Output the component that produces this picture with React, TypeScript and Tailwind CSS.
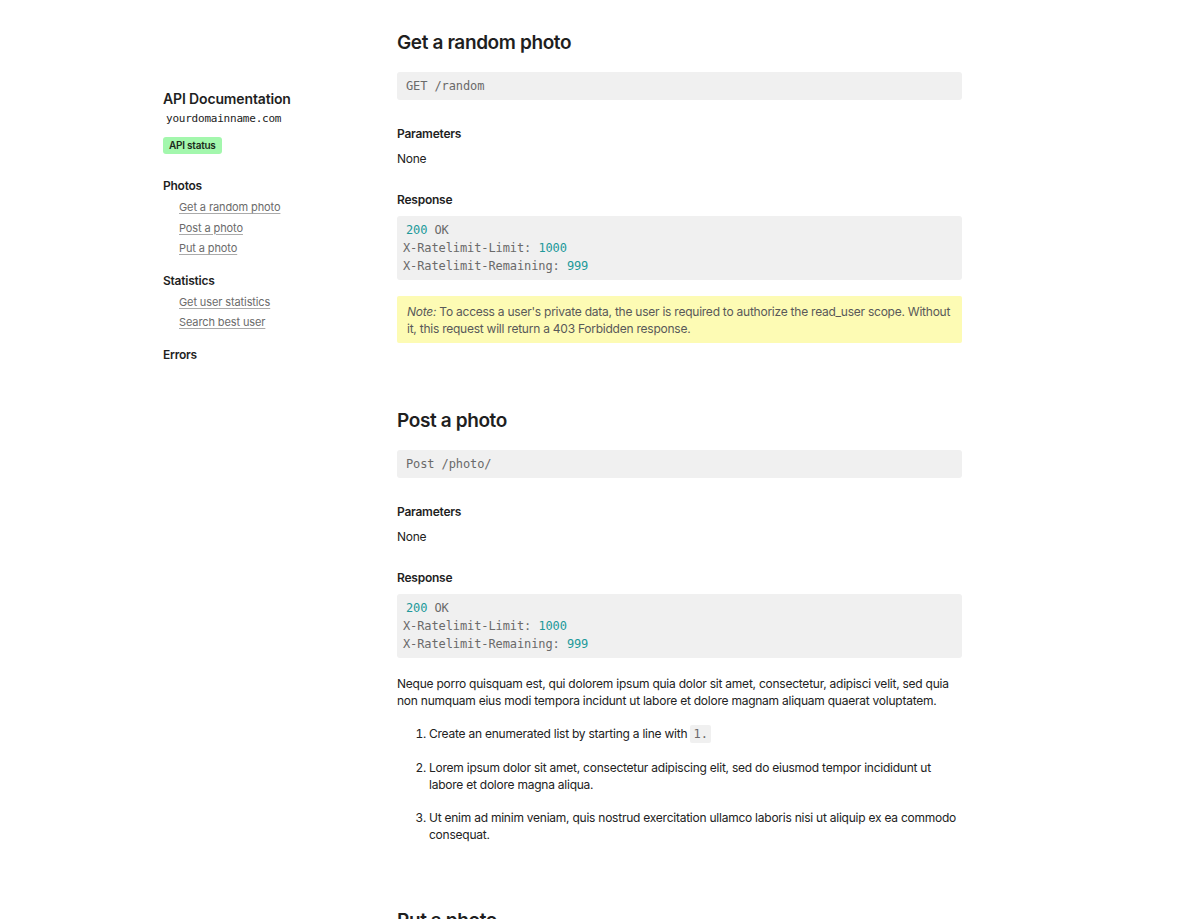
import React from "react";

type Link = { label: string };

const nav: { title: string; links: Link[] }[] = [
  {
    title: "Photos",
    links: [
      { label: "Get a random photo" },
      { label: "Post a photo" },
      { label: "Put a photo" },
    ],
  },
  {
    title: "Statistics",
    links: [{ label: "Get user statistics" }, { label: "Search best user" }],
  },
  { title: "Errors", links: [] },
];

function Sidebar() {
  return (
    <aside className="w-[234px] shrink-0 pt-[90px]">
      <h1 className="text-[14px] leading-[18px] font-semibold tracking-[-0.01em] text-[#1f1f1f]">
        API Documentation
      </h1>
      <div className="mt-[4px] pl-[3px] font-['DejaVu_Sans_Mono',monospace] text-[11px] leading-[14px] tracking-[-0.02em] text-[#222]">
        yourdomainname.com
      </div>
      <span className="mt-[11px] inline-block rounded-[3px] bg-[#a3f7ad] px-[6px] text-[10px] leading-[17px] font-semibold text-[#1b2a1b]">
        API status
      </span>
      {nav.map((group, i) => (
        <div key={group.title} className={i === 0 ? "mt-[23px]" : "mt-[14px]"}>
          <div className="text-[12px] leading-[16px] font-semibold text-[#1f1f1f]">
            {group.title}
          </div>
          {group.links.length > 0 && (
            <ul className="mt-[3px] pl-[16px]">
              {group.links.map((l) => (
                <li key={l.label} className="text-[11px] leading-[20.5px] tracking-[-0.01em]">
                  <a
                    href="#"
                    className="text-[#6b6b6b] underline decoration-[#aaa] underline-offset-2"
                  >
                    {l.label}
                  </a>
                </li>
              ))}
            </ul>
          )}
        </div>
      ))}
    </aside>
  );
}

function Code({ children }: { children: React.ReactNode }) {
  return (
    <pre className="rounded-[3px] bg-[#f0f0f0] px-[6px] py-[5px] font-['DejaVu_Sans_Mono',monospace] text-[12px] leading-[18px] tracking-[-0.1px] text-[#6a6a6a]">
      {children}
    </pre>
  );
}

function Num({ children }: { children: React.ReactNode }) {
  return <span className="text-[#21999a]">{children}</span>;
}

function ResponseBlock() {
  return (
    <Code>
      <div className="pl-[3px]">
        <Num>200</Num> OK
      </div>
      <div>
        X-Ratelimit-Limit: <Num>1000</Num>
      </div>
      <div>
        X-Ratelimit-Remaining: <Num>999</Num>
      </div>
    </Code>
  );
}

function Label({ children, className }: { children: React.ReactNode; className: string }) {
  return (
    <h3 className={`${className} text-[12px] leading-[16px] font-semibold text-[#1f1f1f]`}>
      {children}
    </h3>
  );
}

function Endpoint({
  title,
  route,
  children,
  first,
}: {
  title: string;
  route: string;
  children?: React.ReactNode;
  first?: boolean;
}) {
  return (
    <section className={first ? "" : "mt-[66px]"}>
      <h2 className="text-[19px] leading-[24px] font-semibold tracking-[-0.02em] text-[#1f1f1f]">
        {title}
      </h2>
      <div className="mt-[17px]">
        <Code>
          <div className="pl-[3px]">{route}</div>
        </Code>
      </div>
      <Label className="mt-[26px]">Parameters</Label>
      <p className="mt-[9px] text-[12px] leading-[16px] text-[#222]">None</p>
      <Label className="mt-[25px]">Response</Label>
      <div className="mt-[8px]">
        <ResponseBlock />
      </div>
      {children}
    </section>
  );
}

export default function App() {
  return (
    <div className="min-h-screen bg-white font-['Inter',sans-serif] tracking-[-0.015em] antialiased">
      <div className="flex pl-[163px]">
        <Sidebar />
        <main className="w-[565px] shrink-0 pt-[31px] pb-[120px]">
          <Endpoint first title="Get a random photo" route="GET /random">
            <div className="mt-[16px] rounded-[2px] bg-[#fdfbb4] px-[10px] pt-[7px] pb-[6px] text-[12px] leading-[17px] text-[#595959]">
              <em>Note:</em> To access a user's private data, the user is
              required to authorize the read_user scope. Without it, this
              request will return a 403 Forbidden response.
            </div>
          </Endpoint>

          <Endpoint title="Post a photo" route="Post /photo/">
            <p className="mt-[17px] text-[12px] leading-[17px] text-[#222]">
              Neque porro quisquam est, qui dolorem ipsum quia dolor sit amet,
              consectetur, adipisci velit, sed quia non numquam eius modi
              tempora incidunt ut labore et dolore magnam aliquam quaerat
              voluptatem.
            </p>
            <ol className="mt-[16px] list-decimal space-y-[16px] pl-[32px] text-[12px] leading-[17px] text-[#222]">
              <li>
                Create an enumerated list by starting a line with{" "}
                <code className="rounded-[2px] bg-[#f0f0f0] px-[3px] py-[2px] font-['DejaVu_Sans_Mono',monospace] text-[12px] tracking-normal text-[#6a6a6a]">
                  1.
                </code>
              </li>
              <li>
                Lorem ipsum dolor sit amet, consectetur adipiscing elit, sed do
                eiusmod tempor incididunt ut labore et dolore magna aliqua.
              </li>
              <li>
                Ut enim ad minim veniam, quis nostrud exercitation ullamco
                laboris nisi ut aliquip ex ea commodo consequat.
              </li>
            </ol>
          </Endpoint>

          <Endpoint title="Put a photo" route="PUT /photo/" />
        </main>
      </div>
    </div>
  );
}
